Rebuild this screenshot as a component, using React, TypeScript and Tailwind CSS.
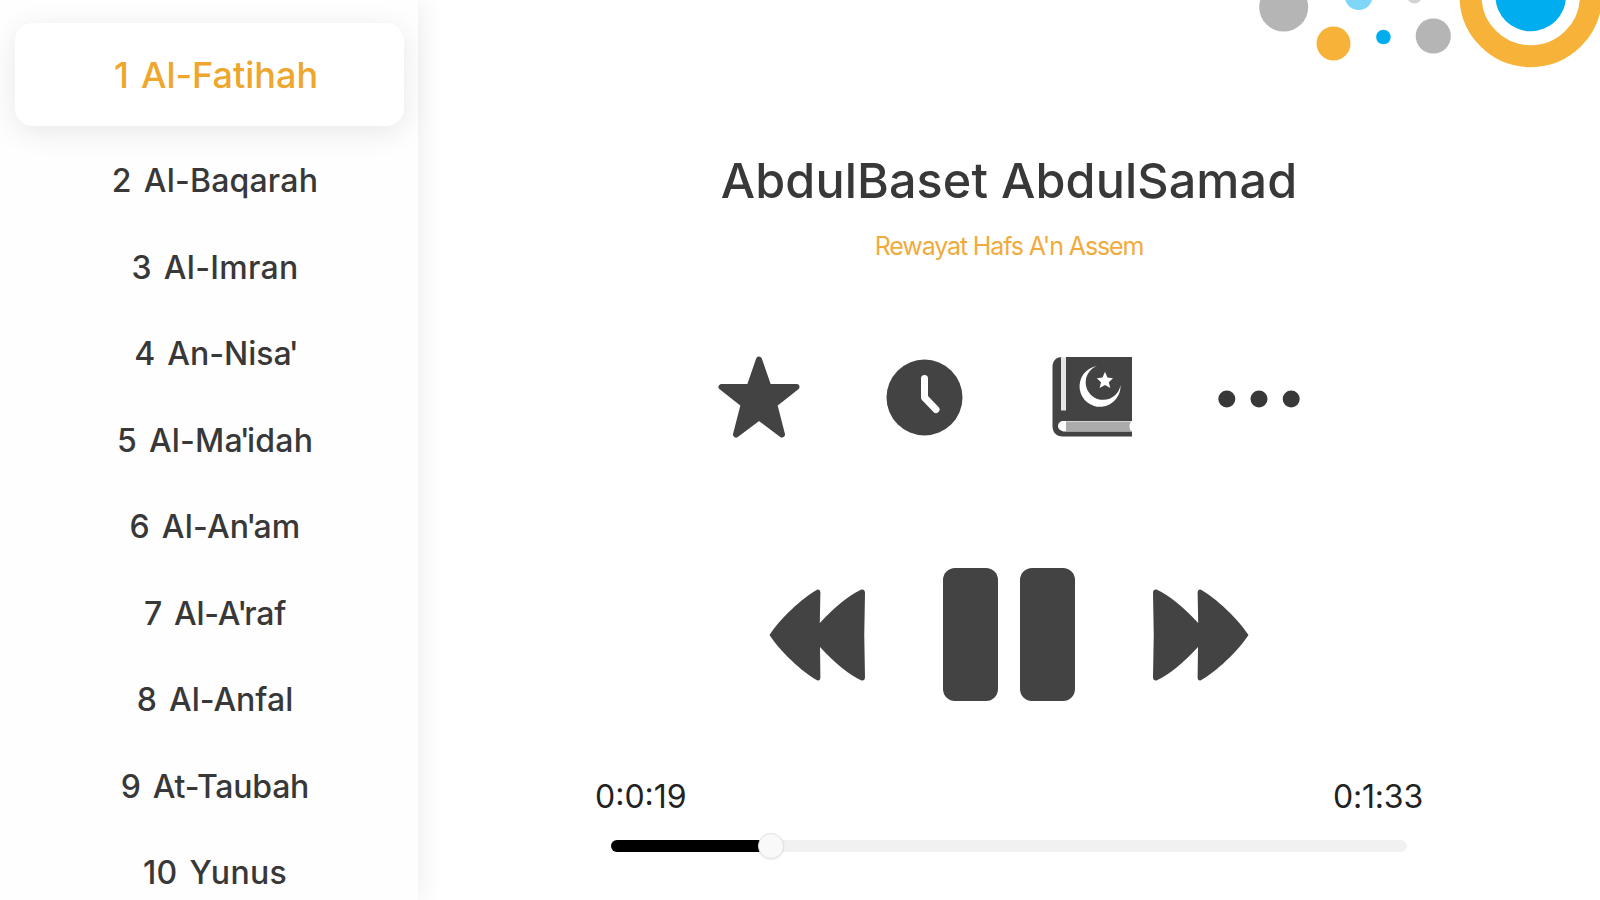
import { clsx } from "clsx";
import { Fragment, useState } from "react";

interface Surah {
	id: number;
	name: string;
	spacing: string;
}

const surahs: Surah[] = [
	{ id: 1, name: "Al-Fatihah", spacing: "tracking-normal" },
	{ id: 2, name: "Al-Baqarah", spacing: "tracking-[0.2px]" },
	{ id: 3, name: "Al-Imran", spacing: "tracking-[0.3px]" },
	{ id: 4, name: "An-Nisa'", spacing: "tracking-normal" },
	{ id: 5, name: "Al-Ma'idah", spacing: "tracking-[0.2px]" },
	{ id: 6, name: "Al-An'am", spacing: "tracking-[0.2px]" },
	{ id: 7, name: "Al-A'raf", spacing: "tracking-[-0.2px]" },
	{ id: 8, name: "Al-Anfal", spacing: "tracking-normal" },
	{ id: 9, name: "At-Taubah", spacing: "tracking-[-0.2px]" },
	{ id: 10, name: "Yunus", spacing: "tracking-[0.3px]" },
];

function SurahName({ name }: { name: string }) {
	return (
		<span className="whitespace-nowrap">
			{name.split("'").map((part, index) => (
				<Fragment key={part}>
					{index > 0 && <span className="mr-[-3px] ml-[-3px]">'</span>}
					{part}
				</Fragment>
			))}
		</span>
	);
}

function Bubbles() {
	return (
		<svg
			className="absolute top-0 right-0 h-[72px] w-[360px]"
			viewBox="1240 0 360 72"
			aria-hidden="true"
		>
			<circle cx="1283.7" cy="7" r="24.5" fill="#b5b5b5" />
			<circle cx="1333.5" cy="43.5" r="17" fill="#f7b239" />
			<circle cx="1358.7" cy="-4" r="14" fill="#7fd6f7" />
			<circle cx="1383.4" cy="37" r="7.3" fill="#00aeef" />
			<circle cx="1414.5" cy="-4" r="7.5" fill="#d2d2d2" />
			<circle cx="1433.3" cy="36" r="17.6" fill="#b5b5b5" />
			<circle cx="1530.7" cy="-4" r="60.2" fill="none" stroke="#f7b239" strokeWidth="22" />
			<circle cx="1530.7" cy="-4" r="35.3" fill="#00aeef" />
		</svg>
	);
}

function StarIcon() {
	return (
		<svg className="h-[82px] w-[82px]" viewBox="0 0 82 82" aria-hidden="true">
			<path
				d="M41 3.5 50.5 31H78.5L56.3 48.5 64 78.5 41 61.3 18 78.5 25.7 48.5 3.5 31H31.5Z"
				fill="#434343"
				stroke="#434343"
				strokeWidth="6"
				strokeLinejoin="round"
			/>
		</svg>
	);
}

function ClockIcon() {
	return (
		<svg className="h-[77px] w-[77px]" viewBox="0 0 77 77" aria-hidden="true">
			<circle cx="38.5" cy="38.5" r="38" fill="#434343" />
			<path
				d="M38.5 19.5V38.5L50 50.5"
				fill="none"
				stroke="#fff"
				strokeWidth="7"
				strokeLinecap="round"
				strokeLinejoin="round"
			/>
		</svg>
	);
}

function QuranIcon() {
	return (
		<svg className="ml-[3px] h-[80px] w-[80px]" viewBox="0 0 80 80" aria-hidden="true">
			<path
				d="M10 0H80V64H11A6 6 0 0 0 11 74.5H80V79.5H11C4 79.5 .5 75 .5 69V10C.5 4 4 0 10 0Z"
				fill="#434343"
			/>
			<path d="M11.5 0V53.5" stroke="#e6e6e6" strokeWidth="5" />
			<path d="M11 64H80Q76 69 80 74H11A5 5 0 0 1 11 64Z" fill="#fff" />
			<path d="M14 64.5H79Q76 69 79 74H14Z" fill="#ababab" />
			<path
				d="M45 9A20.5 20.5 0 1 0 68.5 28A17.5 17.5 0 1 1 45 9Z"
				fill="#fff"
			/>
			<path
				d="M53 14.8 55.4 20.6 61 21.2 56.8 25.2 58.3 31 53 28 47.6 31 49 25.2 44.8 21.2 50.5 20.6Z"
				fill="#fff"
			/>
		</svg>
	);
}

function DotsIcon() {
	return (
		<svg className="mt-1 h-[18px] w-[82px]" viewBox="0 0 82 18" aria-hidden="true">
			<circle cx="8.8" cy="9" r="8.5" fill="#383838" />
			<circle cx="41" cy="9" r="8.5" fill="#383838" />
			<circle cx="73.2" cy="9" r="8.5" fill="#383838" />
		</svg>
	);
}

function SkipIcon({ flipped = false }: { flipped?: boolean }) {
	return (
		<svg
			className={clsx("h-[94px] w-[96px]", flipped && "-scale-x-100")}
			viewBox="0 0 96 94"
			aria-hidden="true"
		>
			<path
				d="M.5 47C11 31 33 10 48.5 1.5Q51 1 51.4 4L50.8 35Q74 10 92.5 1.5Q96 1 96 5Q94.5 47 96 89Q96 93 92.5 92.5Q74 84 51 59L51.4 90Q51 93 48.5 92.5C33 84 11 63 .5 47Z"
				fill="#434343"
			/>
		</svg>
	);
}

function Seeker({ progress }: { progress: number }) {
	return (
		<div className="relative mx-4 mt-[23px] h-3 rounded-full bg-[#f1f1f1]">
			<div
				className="h-3 rounded-full bg-black"
				style={{ width: `${progress}%` }}
			/>
			<div
				className="absolute top-1/2 size-[26px] -translate-x-1/2 -translate-y-1/2 rounded-full border border-[#e2e2e2] bg-[#f9f9f9] shadow-[0_1px_2px_rgba(0,0,0,0.08)]"
				style={{ left: `${progress}%` }}
			/>
		</div>
	);
}

function App() {
	const [activeId, setActiveId] = useState(1);

	return (
		<div className="flex h-[900px] w-[1600px] overflow-hidden bg-white font-['Inter',sans-serif] text-[#383838]">
			<aside className="z-10 flex w-[418px] shrink-0 flex-col bg-[#fefefe] px-[15px] pt-[23px] shadow-[4px_0_24px_rgba(0,0,0,0.07)]">
				{surahs.map((surah) => (
					<button
						key={surah.id}
						type="button"
						onClick={() => setActiveId(surah.id)}
						className={clsx(
							"flex shrink-0 items-center justify-center gap-3 font-medium",
							surah.spacing,
							surah.id === activeId
								? "mb-3 h-[103px] w-[389px] rounded-[18px] bg-white pl-[13px] text-[36px] text-[#eea62c] shadow-[0_6px_30px_rgba(0,0,0,0.09)]"
								: "h-[86.5px] w-[389px] pl-[11px] text-[32px]",
						)}
					>
						<span>{surah.id}</span>
						<SurahName name={surah.name} />
					</button>
				))}
			</aside>

			<main className="relative flex flex-1 flex-col items-center pt-[151px]">
				<Bubbles />
				<h1 className="text-[48.5px] leading-[60px] font-medium tracking-[0.1px] whitespace-nowrap">
					AbdulBaset AbdulSamad
				</h1>
				<p className="mt-[19px] text-[25px] leading-8 tracking-[-1.13px] whitespace-nowrap text-[#f0ab3c]">
					Rewayat Hafs A'n Assem
				</p>

				<div className="mt-[94px] flex h-[82px] w-[582px] items-center justify-between">
					<StarIcon />
					<ClockIcon />
					<QuranIcon />
					<DotsIcon />
				</div>

				<div className="mt-[130px] flex h-[133px] items-center">
					<SkipIcon />
					<div className="mx-[78px] flex gap-[22px]">
						<div className="h-[133px] w-[55px] rounded-[12px] bg-[#434343]" />
						<div className="h-[133px] w-[55px] rounded-[12px] bg-[#434343]" />
					</div>
					<SkipIcon flipped />
				</div>

				<div className="mt-[76px] w-[828px]">
					<div className="flex justify-between text-[32px] leading-[40px] text-[#222]">
						<span>0:0:19</span>
						<span className="tracking-[-0.2px]">0:1:33</span>
					</div>
					<Seeker progress={20.1} />
				</div>
			</main>
		</div>
	);
}

export default App;
